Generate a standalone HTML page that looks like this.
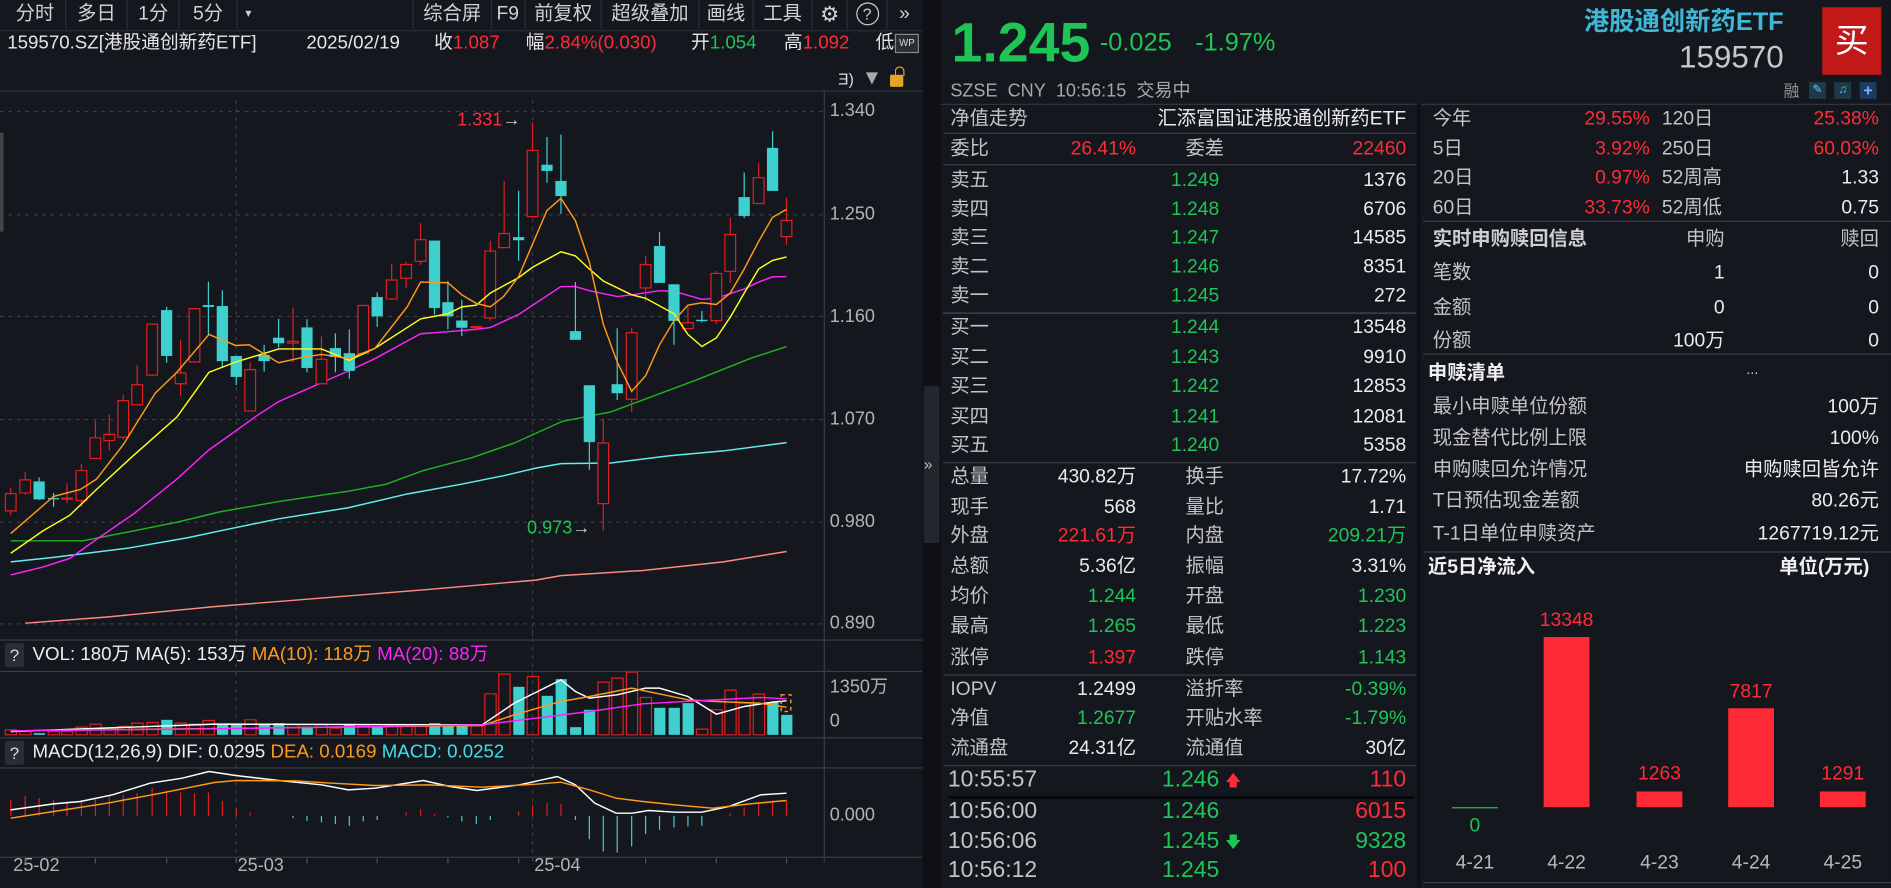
<!DOCTYPE html>
<html><head><meta charset="utf-8">
<style>
html,body{margin:0;padding:0;background:#14171e;overflow:hidden;width:1891px;height:888px}
#w{position:absolute;left:0;top:0;width:1568px;height:736px;transform:scale(1.20599,1.20652);transform-origin:0 0;background:#14171e;font-family:"Liberation Sans","Noto Sans CJK SC",sans-serif;color:#dcdcdc;font-size:16px}
.a{position:absolute;white-space:nowrap;line-height:20px}
.l{color:#c4c4c4}
.v{color:#ececec}
.r{color:#ff2b37}
.g{color:#1fc457}
.hl{position:absolute;height:1px;background:#3a3d44}
.vl{position:absolute;width:1px;background:#2c2f36}
svg{position:absolute;overflow:visible}
.tb{position:absolute;top:0;height:24px;line-height:24px;color:#d2d2d2;font-size:16px;text-align:center}
</style></head><body><div id="w">

<div style="position:absolute;left:0;top:0;width:765px;height:25px;border-bottom:1px solid #2c2f36"></div>
<div class="tb" style="left:4px;width:50px;border-right:1px solid #2c2f36">分时</div>
<div class="tb" style="left:55px;width:50px;border-right:1px solid #2c2f36">多日</div>
<div class="tb" style="left:106px;width:42px;border-right:1px solid #2c2f36">1分</div>
<div class="tb" style="left:149px;width:47px;border-right:1px solid #2c2f36">5分</div>
<div class="tb" style="left:197px;width:18px;font-size:10px">▾</div>
<div class="tb" style="left:342px;width:64px;border-left:1px solid #2c2f36;border-right:1px solid #2c2f36">综合屏</div>
<div class="tb" style="left:407px;width:28px;border-right:1px solid #2c2f36">F9</div>
<div class="tb" style="left:436px;width:62px;border-right:1px solid #2c2f36">前复权</div>
<div class="tb" style="left:499px;width:80px;border-right:1px solid #2c2f36">超级叠加</div>
<div class="tb" style="left:580px;width:44px;border-right:1px solid #2c2f36">画线</div>
<div class="tb" style="left:625px;width:48px;border-right:1px solid #2c2f36">工具</div>
<div class="tb" style="left:674px;width:28px;border-right:1px solid #2c2f36;font-size:18px">⚙</div>
<div class="tb" style="left:703px;width:32px;border-right:1px solid #2c2f36"><span style="display:inline-block;width:17px;height:17px;border:1.5px solid #ccc;border-radius:50%;line-height:17px;font-size:13px;vertical-align:middle">?</span></div>
<div class="tb" style="left:736px;width:28px">»</div>

<div class="a" style="left:6px;top:26px;font-size:15.5px;color:#e6e6e6">159570.SZ[港股通创新药ETF]</div>
<div class="a" style="left:254px;top:26px;font-size:15.5px;color:#e6e6e6">2025/02/19</div>
<div class="a" style="left:360px;top:26px;font-size:15.5px;color:#e6e6e6">收<span class="r">1.087</span></div>
<div class="a" style="left:436px;top:26px;font-size:15.5px;color:#e6e6e6">幅<span class="r">2.84%(0.030)</span></div>
<div class="a" style="left:573px;top:26px;font-size:15.5px;color:#e6e6e6">开<span class="g">1.054</span></div>
<div class="a" style="left:650px;top:26px;font-size:15.5px;color:#e6e6e6">高<span class="r">1.092</span></div>
<div class="a" style="left:726px;top:26px;font-size:15.5px;color:#e6e6e6">低</div>
<div style="position:absolute;left:742px;top:28px;width:18px;height:14px;border:1px solid #888;background:#2a2d33;font-size:8px;line-height:14px;color:#ddd;text-align:center">WP</div>
<div class="a" style="left:695px;top:56px;font-size:13px;color:#ddd">Ǝ)</div>
<div style="position:absolute;left:718px;top:60px;width:0;height:0;border-left:5px solid transparent;border-right:5px solid transparent;border-top:10px solid #aaa"></div>
<div style="position:absolute;left:738px;top:62px;width:11px;height:10px;background:#e0a52a;border-radius:1px"></div>
<div style="position:absolute;left:742px;top:55px;width:6px;height:7px;border:1.5px solid #e0a52a;border-bottom:none;border-radius:4px 4px 0 0"></div>
<div class="hl" style="left:0;top:75px;width:765px;background:#33363d"></div>

<div class="vl" style="left:683px;top:75px;height:640px;background:#3a3d44"></div>
<div class="a" style="left:688px;top:82px;font-size:15px;color:#b4b4b4">1.340</div>
<div class="a" style="left:688px;top:168px;font-size:15px;color:#b4b4b4">1.250</div>
<div class="a" style="left:688px;top:253px;font-size:15px;color:#b4b4b4">1.160</div>
<div class="a" style="left:688px;top:338px;font-size:15px;color:#b4b4b4">1.070</div>
<div class="a" style="left:688px;top:423px;font-size:15px;color:#b4b4b4">0.980</div>
<div class="a" style="left:688px;top:507px;font-size:15px;color:#b4b4b4">0.890</div>
<div class="vl" style="left:0;top:110px;width:3px;height:82px;background:#444"></div>

<svg style="left:0;top:82.9px;width:696.6px;height:447.8px" viewBox="0 0 1568 1568" preserveAspectRatio="none">
<g stroke="#3a3e46" stroke-dasharray="3 4" fill="none">
<line x1="0" y1="33" x2="1540" y2="33" vector-effect="non-scaling-stroke"/>
<line x1="0" y1="333" x2="1540" y2="333" vector-effect="non-scaling-stroke"/>
<line x1="0" y1="628" x2="1540" y2="628" vector-effect="non-scaling-stroke"/>
<line x1="0" y1="927" x2="1540" y2="927" vector-effect="non-scaling-stroke"/>
<line x1="0" y1="1225" x2="1540" y2="1225" vector-effect="non-scaling-stroke"/>
<line x1="0" y1="1520" x2="1540" y2="1520" vector-effect="non-scaling-stroke"/>
<line x1="441" y1="0" x2="441" y2="1568" vector-effect="non-scaling-stroke"/>
<line x1="994" y1="0" x2="994" y2="1568" vector-effect="non-scaling-stroke"/>
</g>
<g fill="none" stroke-width="1.2">
<polyline vector-effect="non-scaling-stroke" stroke="#ff8a80" points="47,1518 200,1500 400,1470 600,1445 800,1420 1000,1393 1047,1380 1200,1365 1350,1340 1468,1310"/>
<polyline vector-effect="non-scaling-stroke" stroke="#5ff0f0" points="20,1340 100,1327 240,1300 350,1270 420,1247 520,1215 650,1183 760,1143 860,1115 940,1090 1000,1068 1047,1055 1140,1053 1250,1032 1350,1018 1468,994"/>
<polyline vector-effect="non-scaling-stroke" stroke="#1fb41f" points="20,1279 155,1279 250,1250 330,1225 410,1195 520,1165 650,1135 720,1115 790,1075 880,1038 960,995 1050,932 1140,905 1200,870 1300,812 1400,750 1468,715"/>
<polyline vector-effect="non-scaling-stroke" stroke="#ff22ff" points="20,1378 80,1355 130,1330 180,1275 250,1200 330,1100 390,1015 440,960 480,915 520,875 600,820 652,785 700,750 785,678 836,672 889,665 915,660 968,622 1047,541 1074,541 1100,553 1152,570 1179,565 1231,553 1258,555 1310,578 1337,575 1389,548 1416,528 1442,513 1468,512"/>
</g>
<g stroke="#e01e1e" fill="#14171e">
<line x1="20" y1="1125" x2="20" y2="1205" vector-effect="non-scaling-stroke"/><rect x="10" y="1142" width="20" height="50" vector-effect="non-scaling-stroke"/>
<line x1="47" y1="1078" x2="47" y2="1145" vector-effect="non-scaling-stroke"/><rect x="37" y="1102" width="20" height="38" vector-effect="non-scaling-stroke"/>
<line x1="125" y1="1112" x2="125" y2="1170" vector-effect="non-scaling-stroke"/><rect x="115" y="1155" width="20" height="3" vector-effect="non-scaling-stroke"/>
<line x1="152" y1="1055" x2="152" y2="1180" vector-effect="non-scaling-stroke"/><rect x="142" y="1075" width="20" height="87" vector-effect="non-scaling-stroke"/>
<line x1="178" y1="930" x2="178" y2="1040" vector-effect="non-scaling-stroke"/><rect x="168" y="980" width="20" height="60" vector-effect="non-scaling-stroke"/>
<line x1="204" y1="912" x2="204" y2="1018" vector-effect="non-scaling-stroke"/><rect x="194" y="970" width="20" height="18" vector-effect="non-scaling-stroke"/>
<line x1="230" y1="855" x2="230" y2="985" vector-effect="non-scaling-stroke"/><rect x="220" y="872" width="20" height="106" vector-effect="non-scaling-stroke"/>
<line x1="256" y1="768" x2="256" y2="884" vector-effect="non-scaling-stroke"/><rect x="246" y="826" width="20" height="58" vector-effect="non-scaling-stroke"/>
<line x1="284" y1="648" x2="284" y2="800" vector-effect="non-scaling-stroke"/><rect x="274" y="650" width="20" height="148" vector-effect="non-scaling-stroke"/>
<line x1="337" y1="695" x2="337" y2="858" vector-effect="non-scaling-stroke"/><rect x="327" y="792" width="20" height="31" vector-effect="non-scaling-stroke"/>
<rect x="353" y="605" width="20" height="155" vector-effect="non-scaling-stroke"/>
<line x1="467" y1="762" x2="467" y2="902" vector-effect="non-scaling-stroke"/><rect x="457" y="782" width="20" height="120" vector-effect="non-scaling-stroke"/>
<line x1="547" y1="602" x2="547" y2="760" vector-effect="non-scaling-stroke"/><rect x="537" y="700" width="20" height="5" vector-effect="non-scaling-stroke"/>
<line x1="600" y1="686" x2="600" y2="823" vector-effect="non-scaling-stroke"/><rect x="590" y="752" width="20" height="71" vector-effect="non-scaling-stroke"/>
<line x1="678" y1="596" x2="678" y2="740" vector-effect="non-scaling-stroke"/><rect x="668" y="596" width="20" height="139" vector-effect="non-scaling-stroke"/>
<line x1="731" y1="475" x2="731" y2="580" vector-effect="non-scaling-stroke"/><rect x="721" y="522" width="20" height="55" vector-effect="non-scaling-stroke"/>
<line x1="758" y1="470" x2="758" y2="545" vector-effect="non-scaling-stroke"/><rect x="748" y="477" width="20" height="40" vector-effect="non-scaling-stroke"/>
<line x1="785" y1="357" x2="785" y2="478" vector-effect="non-scaling-stroke"/><rect x="775" y="405" width="20" height="63" vector-effect="non-scaling-stroke"/>
<line x1="889" y1="655" x2="889" y2="670" vector-effect="non-scaling-stroke"/><rect x="879" y="657" width="20" height="3" vector-effect="non-scaling-stroke"/>
<line x1="915" y1="408" x2="915" y2="640" vector-effect="non-scaling-stroke"/><rect x="905" y="438" width="20" height="194" vector-effect="non-scaling-stroke"/>
<line x1="941" y1="235" x2="941" y2="428" vector-effect="non-scaling-stroke"/><rect x="931" y="387" width="20" height="41" vector-effect="non-scaling-stroke"/>
<line x1="994" y1="65" x2="994" y2="338" vector-effect="non-scaling-stroke"/><rect x="984" y="146" width="20" height="192" vector-effect="non-scaling-stroke"/>
<line x1="1126" y1="925" x2="1126" y2="1250" vector-effect="non-scaling-stroke"/><rect x="1116" y="995" width="20" height="176" vector-effect="non-scaling-stroke"/>
<line x1="1179" y1="660" x2="1179" y2="905" vector-effect="non-scaling-stroke"/><rect x="1169" y="675" width="20" height="193" vector-effect="non-scaling-stroke"/>
<line x1="1205" y1="452" x2="1205" y2="585" vector-effect="non-scaling-stroke"/><rect x="1195" y="477" width="20" height="68" vector-effect="non-scaling-stroke"/>
<line x1="1284" y1="600" x2="1284" y2="663" vector-effect="non-scaling-stroke"/><rect x="1274" y="646" width="20" height="17" vector-effect="non-scaling-stroke"/>
<line x1="1337" y1="496" x2="1337" y2="650" vector-effect="non-scaling-stroke"/><rect x="1327" y="503" width="20" height="137" vector-effect="non-scaling-stroke"/>
<line x1="1363" y1="340" x2="1363" y2="530" vector-effect="non-scaling-stroke"/><rect x="1353" y="390" width="20" height="107" vector-effect="non-scaling-stroke"/>
<line x1="1416" y1="183" x2="1416" y2="300" vector-effect="non-scaling-stroke"/><rect x="1406" y="225" width="20" height="75" vector-effect="non-scaling-stroke"/>
<line x1="1468" y1="283" x2="1468" y2="420" vector-effect="non-scaling-stroke"/><rect x="1458" y="349" width="20" height="47" vector-effect="non-scaling-stroke"/>
</g>
<g stroke="#3ecfcf" fill="#3ecfcf">
<line x1="73" y1="1095" x2="73" y2="1160" vector-effect="non-scaling-stroke"/><rect x="63" y="1107" width="20" height="51"/>
<line x1="100" y1="1140" x2="100" y2="1180" vector-effect="non-scaling-stroke"/><rect x="90" y="1155" width="20" height="3"/>
<line x1="311" y1="600" x2="311" y2="762" vector-effect="non-scaling-stroke"/><rect x="301" y="610" width="20" height="132"/>
<line x1="389" y1="527" x2="389" y2="680" vector-effect="non-scaling-stroke"/><rect x="379" y="595" width="20" height="5"/>
<line x1="415" y1="552" x2="415" y2="775" vector-effect="non-scaling-stroke"/><rect x="405" y="598" width="20" height="159"/>
<line x1="441" y1="743" x2="441" y2="827" vector-effect="non-scaling-stroke"/><rect x="431" y="743" width="20" height="60"/>
<line x1="493" y1="710" x2="493" y2="788" vector-effect="non-scaling-stroke"/><rect x="483" y="740" width="20" height="17"/>
<line x1="520" y1="635" x2="520" y2="718" vector-effect="non-scaling-stroke"/><rect x="510" y="690" width="20" height="15"/>
<line x1="573" y1="636" x2="573" y2="790" vector-effect="non-scaling-stroke"/><rect x="563" y="660" width="20" height="117"/>
<line x1="626" y1="677" x2="626" y2="790" vector-effect="non-scaling-stroke"/><rect x="616" y="720" width="20" height="25"/>
<line x1="652" y1="665" x2="652" y2="808" vector-effect="non-scaling-stroke"/><rect x="642" y="735" width="20" height="50"/>
<line x1="704" y1="558" x2="704" y2="658" vector-effect="non-scaling-stroke"/><rect x="694" y="572" width="20" height="55"/>
<line x1="811" y1="408" x2="811" y2="622" vector-effect="non-scaling-stroke"/><rect x="801" y="408" width="20" height="195"/>
<line x1="836" y1="525" x2="836" y2="665" vector-effect="non-scaling-stroke"/><rect x="826" y="587" width="20" height="40"/>
<line x1="862" y1="580" x2="862" y2="685" vector-effect="non-scaling-stroke"/><rect x="852" y="640" width="20" height="20"/>
<line x1="968" y1="263" x2="968" y2="466" vector-effect="non-scaling-stroke"/><rect x="958" y="398" width="20" height="8"/>
<line x1="1021" y1="107" x2="1021" y2="240" vector-effect="non-scaling-stroke"/><rect x="1011" y="188" width="20" height="17"/>
<line x1="1047" y1="100" x2="1047" y2="330" vector-effect="non-scaling-stroke"/><rect x="1037" y="235" width="20" height="43"/>
<line x1="1074" y1="528" x2="1074" y2="695" vector-effect="non-scaling-stroke"/><rect x="1064" y="671" width="20" height="24"/>
<line x1="1100" y1="828" x2="1100" y2="1073" vector-effect="non-scaling-stroke"/><rect x="1090" y="828" width="20" height="164"/>
<line x1="1152" y1="662" x2="1152" y2="870" vector-effect="non-scaling-stroke"/><rect x="1142" y="825" width="20" height="25"/>
<line x1="1231" y1="383" x2="1231" y2="530" vector-effect="non-scaling-stroke"/><rect x="1221" y="424" width="20" height="106"/>
<line x1="1258" y1="535" x2="1258" y2="710" vector-effect="non-scaling-stroke"/><rect x="1248" y="535" width="20" height="105"/>
<line x1="1310" y1="612" x2="1310" y2="645" vector-effect="non-scaling-stroke"/><rect x="1300" y="638" width="20" height="3"/>
<line x1="1389" y1="210" x2="1389" y2="342" vector-effect="non-scaling-stroke"/><rect x="1379" y="282" width="20" height="54"/>
<line x1="1442" y1="90" x2="1442" y2="263" vector-effect="non-scaling-stroke"/><rect x="1432" y="139" width="20" height="124"/>
</g>
<g fill="none" stroke-width="1.2">
<polyline vector-effect="non-scaling-stroke" stroke="#ffff20" points="20,1315 80,1250 130,1205 180,1130 250,1030 330,920 390,790 440,760 493,735 520,722 600,722 652,755 700,720 760,660 785,635 836,620 862,600 889,595 915,560 968,515 994,485 1047,440 1074,452 1100,490 1126,525 1179,565 1205,575 1258,620 1284,680 1310,715 1337,690 1363,630 1389,560 1416,490 1442,465 1468,455"/>
<polyline vector-effect="non-scaling-stroke" stroke="#ff9a1a" points="20,1258 100,1150 150,1130 180,1100 230,1000 290,850 330,790 390,680 440,712 465,710 520,762 570,745 600,738 652,750 700,720 760,600 785,528 836,530 862,565 889,590 915,600 940,570 968,512 1021,320 1047,285 1074,350 1100,470 1126,650 1152,760 1179,845 1205,800 1231,710 1258,640 1284,595 1310,588 1337,593 1363,560 1389,490 1416,410 1442,340 1468,317"/>
</g>
</svg>
<div class="a r" style="left:379px;top:90px;font-size:15px">1.331<span style="color:#ccc">→</span></div>
<div class="a g" style="left:437px;top:428px;font-size:15px">0.973<span style="color:#ccc">→</span></div>

<div class="hl" style="left:0;top:530px;width:765px;background:#3a3d44"></div>
<div style="position:absolute;left:4px;top:533px;width:16px;height:20px;background:#2a2d33;border-radius:2px;color:#ddd;font-size:14px;text-align:center;line-height:20px">?</div>
<div class="a" style="left:27px;top:533px;font-size:15.5px;color:#eee">VOL: 180万 MA(5): 153万 <span style="color:#ff9a1a">MA(10): 118万</span> <span style="color:#ff22ff">MA(20): 88万</span></div>
<div class="hl" style="left:0;top:556px;width:765px;background:#3a3d44"></div>
<div class="a" style="left:688px;top:560px;font-size:15px;color:#b4b4b4">1350万</div>
<div class="a" style="left:688px;top:588px;font-size:15px;color:#b4b4b4">0</div>
<div class="hl" style="left:0;top:611px;width:765px;background:#3a3d44"></div>
<div style="position:absolute;left:4px;top:614px;width:16px;height:20px;background:#2a2d33;border-radius:2px;color:#ddd;font-size:14px;text-align:center;line-height:20px">?</div>
<div class="a" style="left:27px;top:614px;font-size:15.5px;color:#eee">MACD(12,26,9) DIF: 0.0295 <span style="color:#ff9a1a">DEA: 0.0169</span> <span style="color:#40e0e8">MACD: 0.0252</span></div>
<div class="hl" style="left:0;top:636px;width:765px;background:#3a3d44"></div>
<div class="a" style="left:688px;top:666px;font-size:15px;color:#b4b4b4">0.000</div>
<div class="hl" style="left:0;top:710px;width:765px;background:#3a3d44"></div>
<div class="a" style="left:11px;top:708px;font-size:15px;color:#b4b4b4">25-02</div>
<div class="a" style="left:197px;top:708px;font-size:15px;color:#b4b4b4">25-03</div>
<div class="a" style="left:443px;top:708px;font-size:15px;color:#b4b4b4">25-04</div>

<svg style="left:0;top:522.4px;width:696.6px;height:213.9px" viewBox="0 0 1568 774" preserveAspectRatio="none">
<g stroke="#3a3e46" stroke-dasharray="3 4" fill="none">
<line x1="441" y1="0" x2="441" y2="700" vector-effect="non-scaling-stroke"/>
<line x1="994" y1="0" x2="994" y2="700" vector-effect="non-scaling-stroke"/>
</g>
<g stroke="#555" fill="none">
<path vector-effect="non-scaling-stroke" d="M47 685V700M178 685V700M311 685V700M441 685V700M573 685V700M704 685V700M836 685V700M968 685V700M1074 685V700M1205 685V700M1337 685V700M1468 685V700"/>
</g>
<g stroke="#e01e1e" fill="none">
<rect x="10" y="300" width="21" height="15" vector-effect="non-scaling-stroke"/><rect x="37" y="305" width="21" height="10" vector-effect="non-scaling-stroke"/><rect x="90" y="305" width="21" height="10" vector-effect="non-scaling-stroke"/><rect x="115" y="305" width="21" height="10" vector-effect="non-scaling-stroke"/><rect x="142" y="292" width="21" height="23" vector-effect="non-scaling-stroke"/><rect x="168" y="283" width="21" height="32" vector-effect="non-scaling-stroke"/><rect x="194" y="295" width="21" height="20" vector-effect="non-scaling-stroke"/><rect x="220" y="290" width="21" height="25" vector-effect="non-scaling-stroke"/><rect x="246" y="280" width="21" height="35" vector-effect="non-scaling-stroke"/><rect x="274" y="278" width="21" height="37" vector-effect="non-scaling-stroke"/><rect x="327" y="280" width="21" height="35" vector-effect="non-scaling-stroke"/><rect x="353" y="283" width="21" height="32" vector-effect="non-scaling-stroke"/><rect x="379" y="272" width="21" height="43" vector-effect="non-scaling-stroke"/><rect x="457" y="270" width="21" height="45" vector-effect="non-scaling-stroke"/><rect x="537" y="285" width="21" height="30" vector-effect="non-scaling-stroke"/><rect x="590" y="285" width="21" height="30" vector-effect="non-scaling-stroke"/><rect x="616" y="295" width="21" height="20" vector-effect="non-scaling-stroke"/><rect x="668" y="288" width="21" height="27" vector-effect="non-scaling-stroke"/><rect x="721" y="288" width="21" height="27" vector-effect="non-scaling-stroke"/><rect x="748" y="288" width="21" height="27" vector-effect="non-scaling-stroke"/><rect x="775" y="285" width="21" height="30" vector-effect="non-scaling-stroke"/><rect x="879" y="288" width="21" height="27" vector-effect="non-scaling-stroke"/><rect x="905" y="192" width="21" height="123" vector-effect="non-scaling-stroke"/><rect x="931" y="133" width="21" height="182" vector-effect="non-scaling-stroke"/><rect x="984" y="140" width="21" height="175" vector-effect="non-scaling-stroke"/><rect x="1116" y="157" width="21" height="158" vector-effect="non-scaling-stroke"/><rect x="1142" y="145" width="21" height="170" vector-effect="non-scaling-stroke"/><rect x="1169" y="127" width="21" height="188" vector-effect="non-scaling-stroke"/><rect x="1195" y="203" width="21" height="112" vector-effect="non-scaling-stroke"/><rect x="1300" y="298" width="21" height="17" vector-effect="non-scaling-stroke"/><rect x="1327" y="240" width="21" height="75" vector-effect="non-scaling-stroke"/><rect x="1353" y="181" width="21" height="134" vector-effect="non-scaling-stroke"/><rect x="1379" y="220" width="21" height="95" vector-effect="non-scaling-stroke"/><rect x="1406" y="193" width="21" height="122" vector-effect="non-scaling-stroke"/>
</g>
<g fill="#3ecfcf">
<rect x="63" y="310" width="21" height="5"/><rect x="301" y="270" width="21" height="45"/><rect x="405" y="283" width="21" height="32"/><rect x="431" y="285" width="21" height="30"/><rect x="483" y="285" width="21" height="30"/><rect x="510" y="280" width="21" height="35"/><rect x="563" y="290" width="21" height="25"/><rect x="642" y="285" width="21" height="30"/><rect x="694" y="293" width="21" height="22"/><rect x="801" y="280" width="21" height="35"/><rect x="826" y="285" width="21" height="30"/><rect x="852" y="288" width="21" height="27"/><rect x="958" y="171" width="21" height="144"/><rect x="1011" y="198" width="21" height="117"/><rect x="1037" y="148" width="21" height="167"/><rect x="1064" y="292" width="21" height="23"/><rect x="1090" y="240" width="21" height="75"/><rect x="1221" y="234" width="21" height="81"/><rect x="1248" y="234" width="21" height="81"/><rect x="1274" y="220" width="21" height="95"/><rect x="1432" y="218" width="21" height="97"/><rect x="1458" y="255" width="21" height="60"/>
</g>
<g fill="none" stroke-width="1.2">
<polyline vector-effect="non-scaling-stroke" stroke="#ffffff" points="20,305 400,283 900,285 960,220 1047,150 1074,185 1100,205 1152,195 1205,175 1231,175 1284,200 1337,253 1389,230 1442,217 1468,213"/>
<polyline vector-effect="non-scaling-stroke" stroke="#ff9a1a" points="20,303 900,287 960,255 1047,215 1100,200 1179,175 1284,210 1337,215 1416,220 1468,232"/>
<polyline vector-effect="non-scaling-stroke" stroke="#ff22ff" points="20,303 400,297 900,285 1000,265 1100,245 1200,222 1300,213 1420,203 1468,207"/>
<rect x="1458" y="195" width="18" height="50" stroke="#e0a52a" stroke-dasharray="3 3" vector-effect="non-scaling-stroke"/>
</g>
<g stroke="#e01e1e" fill="none">
<path vector-effect="non-scaling-stroke" d="M20 558V510M47 558V498M73 558V505M100 558V510M125 558V515M152 558V510M178 558V505M204 558V500M230 558V495M256 558V490M284 558V475M311 558V483M337 558V488M363 558V490M389 558V488M415 558V513M441 558V535M467 558V548M758 558V548M785 558V538M811 558V553M968 558V545M994 558V525M1021 558V520M1047 558V523M1363 558V550M1389 558V533M1416 558V520M1442 558V512M1468 558V515"/>
</g>
<g stroke="#3ecfcf" fill="none">
<path vector-effect="non-scaling-stroke" d="M547 558V565M573 558V573M600 558V578M626 558V582M652 558V588M678 558V575M704 558V570M836 558V563M862 558V575M889 558V582M915 558V570M1074 558V570M1100 558V628M1126 558V665M1152 558V668M1179 558V650M1205 558V612M1231 558V600M1258 558V593M1284 558V590M1310 558V588"/>
</g>
<g fill="none" stroke-width="1.2">
<polyline vector-effect="non-scaling-stroke" stroke="#ffffff" points="20,540 100,522 150,515 210,495 280,460 340,445 390,425 440,437 520,452 600,465 650,480 700,475 790,452 840,470 890,482 970,465 1040,440 1074,465 1110,520 1150,550 1180,550 1210,542 1260,547 1310,547 1360,530 1420,495 1468,490"/>
<polyline vector-effect="non-scaling-stroke" stroke="#ff9a1a" points="20,565 100,545 200,520 300,490 400,458 440,452 550,453 620,460 700,467 800,465 900,472 1000,463 1047,457 1100,480 1150,505 1200,515 1260,525 1330,535 1400,522 1468,512"/>
</g>
</svg>

<div style="position:absolute;left:765px;top:0;width:15px;height:736px;background:#0e1015"></div>
<div style="position:absolute;left:766px;top:320px;width:13px;height:130px;background:#23262d"></div>
<div class="a" style="left:766px;top:375px;font-size:13px;color:#bbb">»</div>

<div class="a g" style="left:789px;top:8px;font-size:46px;line-height:54px;font-weight:bold">1.245</div>
<div class="a g" style="left:912px;top:24px;font-size:21px;line-height:24px">-0.025</div>
<div class="a g" style="left:991px;top:24px;font-size:21px;line-height:24px">-1.97%</div>
<div class="a" style="left:788px;top:66px;font-size:15px;color:#a8a8a8">SZSE&nbsp;&nbsp;CNY&nbsp;&nbsp;10:56:15&nbsp;&nbsp;交易中</div>
<div class="hl" style="left:780px;top:86px;width:788px;background:#33363d"></div>

<div class="vl" style="left:1175px;top:86px;height:650px;width:3px;background:#0e1015"></div>

<div class="a l" style="left:788px;top:89px">净值走势</div>
<div class="a v" style="right:402px;top:89px">汇添富国证港股通创新药ETF</div>
<div class="hl" style="left:782px;top:110px;width:392px"></div>
<div class="a l" style="left:788px;top:114px">委比</div><div class="a r" style="right:626px;top:114px">26.41%</div>
<div class="a l" style="left:983px;top:114px">委差</div><div class="a r" style="right:402px;top:114px">22460</div>
<div class="hl" style="left:782px;top:136px;width:392px"></div>

<div class="a l" style="left:788px;top:140px">卖五</div><div class="a g" style="right:557px;top:140px">1.249</div><div class="a v" style="right:402px;top:140px">1376</div>
<div class="a l" style="left:788px;top:164px">卖四</div><div class="a g" style="right:557px;top:164px">1.248</div><div class="a v" style="right:402px;top:164px">6706</div>
<div class="a l" style="left:788px;top:188px">卖三</div><div class="a g" style="right:557px;top:188px">1.247</div><div class="a v" style="right:402px;top:188px">14585</div>
<div class="a l" style="left:788px;top:212px">卖二</div><div class="a g" style="right:557px;top:212px">1.246</div><div class="a v" style="right:402px;top:212px">8351</div>
<div class="a l" style="left:788px;top:236px">卖一</div><div class="a g" style="right:557px;top:236px">1.245</div><div class="a v" style="right:402px;top:236px">272</div>
<div class="hl" style="left:782px;top:259px;width:392px;background:#4a4d54"></div>
<div class="a l" style="left:788px;top:262px">买一</div><div class="a g" style="right:557px;top:262px">1.244</div><div class="a v" style="right:402px;top:262px">13548</div>
<div class="a l" style="left:788px;top:287px">买二</div><div class="a g" style="right:557px;top:287px">1.243</div><div class="a v" style="right:402px;top:287px">9910</div>
<div class="a l" style="left:788px;top:311px">买三</div><div class="a g" style="right:557px;top:311px">1.242</div><div class="a v" style="right:402px;top:311px">12853</div>
<div class="a l" style="left:788px;top:336px">买四</div><div class="a g" style="right:557px;top:336px">1.241</div><div class="a v" style="right:402px;top:336px">12081</div>
<div class="a l" style="left:788px;top:360px">买五</div><div class="a g" style="right:557px;top:360px">1.240</div><div class="a v" style="right:402px;top:360px">5358</div>
<div class="hl" style="left:782px;top:383px;width:392px"></div>

<div class="a l" style="left:788px;top:386px">总量</div><div class="a v" style="right:626px;top:386px">430.82万</div><div class="a l" style="left:983px;top:386px">换手</div><div class="a v" style="right:402px;top:386px">17.72%</div>
<div class="a l" style="left:788px;top:411px">现手</div><div class="a v" style="right:626px;top:411px">568</div><div class="a l" style="left:983px;top:411px">量比</div><div class="a v" style="right:402px;top:411px">1.71</div>
<div class="a l" style="left:788px;top:435px">外盘</div><div class="a r" style="right:626px;top:435px">221.61万</div><div class="a l" style="left:983px;top:435px">内盘</div><div class="a g" style="right:402px;top:435px">209.21万</div>
<div class="a l" style="left:788px;top:460px">总额</div><div class="a v" style="right:626px;top:460px">5.36亿</div><div class="a l" style="left:983px;top:460px">振幅</div><div class="a v" style="right:402px;top:460px">3.31%</div>
<div class="a l" style="left:788px;top:485px">均价</div><div class="a g" style="right:626px;top:485px">1.244</div><div class="a l" style="left:983px;top:485px">开盘</div><div class="a g" style="right:402px;top:485px">1.230</div>
<div class="a l" style="left:788px;top:510px">最高</div><div class="a g" style="right:626px;top:510px">1.265</div><div class="a l" style="left:983px;top:510px">最低</div><div class="a g" style="right:402px;top:510px">1.223</div>
<div class="a l" style="left:788px;top:536px">涨停</div><div class="a r" style="right:626px;top:536px">1.397</div><div class="a l" style="left:983px;top:536px">跌停</div><div class="a g" style="right:402px;top:536px">1.143</div>
<div class="hl" style="left:782px;top:559px;width:392px"></div>
<div class="a l" style="left:788px;top:562px">IOPV</div><div class="a v" style="right:626px;top:562px">1.2499</div><div class="a l" style="left:983px;top:562px">溢折率</div><div class="a g" style="right:402px;top:562px">-0.39%</div>
<div class="a l" style="left:788px;top:586px">净值</div><div class="a g" style="right:626px;top:586px">1.2677</div><div class="a l" style="left:983px;top:586px">开贴水率</div><div class="a g" style="right:402px;top:586px">-1.79%</div>
<div class="a l" style="left:788px;top:611px">流通盘</div><div class="a v" style="right:626px;top:611px">24.31亿</div><div class="a l" style="left:983px;top:611px">流通值</div><div class="a v" style="right:402px;top:611px">30亿</div>
<div class="hl" style="left:782px;top:634px;width:392px"></div>

<div class="a l" style="left:786px;top:636px;font-size:19px;line-height:22px">10:55:57</div><div class="a g" style="right:557px;top:636px;font-size:19px;line-height:22px">1.246</div><div class="a r" style="left:1016px;top:637px;font-size:13px">🡅</div><div class="a r" style="right:402px;top:636px;font-size:19px;line-height:22px">110</div>
<div class="hl" style="left:786px;top:660px;width:386px;background:#050608;height:2px"></div>
<div class="a l" style="left:786px;top:662px;font-size:19px;line-height:22px">10:56:00</div><div class="a g" style="right:557px;top:662px;font-size:19px;line-height:22px">1.246</div><div class="a r" style="right:402px;top:662px;font-size:19px;line-height:22px">6015</div>
<div class="a l" style="left:786px;top:687px;font-size:19px;line-height:22px">10:56:06</div><div class="a g" style="right:557px;top:687px;font-size:19px;line-height:22px">1.245</div><div class="a g" style="left:1016px;top:688px;font-size:13px">🡇</div><div class="a g" style="right:402px;top:687px;font-size:19px;line-height:22px">9328</div>
<div class="a l" style="left:786px;top:711px;font-size:19px;line-height:22px">10:56:12</div><div class="a g" style="right:557px;top:711px;font-size:19px;line-height:22px">1.245</div><div class="a r" style="right:402px;top:711px;font-size:19px;line-height:22px">100</div>

<div class="a" style="right:89px;top:6px;font-size:21px;line-height:26px;color:#3fb7d6;font-weight:bold">港股通创新药ETF</div>
<div class="a" style="right:89px;top:32px;font-size:26px;line-height:30px;color:#c8c8c8">159570</div>
<div style="position:absolute;left:1511px;top:6px;width:49px;height:56px;background:#c21818;color:#fff;font-size:28px;line-height:56px;text-align:center">买</div>
<div class="a" style="left:1479px;top:66px;font-size:13px;color:#999">融</div>
<div style="position:absolute;left:1500px;top:68px;width:14px;height:14px;background:#1d3a48;color:#5fd0f0;font-size:10px;line-height:14px;text-align:center">✎</div>
<div style="position:absolute;left:1521px;top:68px;width:14px;height:14px;background:#1d3a48;color:#5fa8f0;font-size:10px;line-height:14px;text-align:center">♫</div>
<div style="position:absolute;left:1542px;top:68px;width:14px;height:14px;background:#1d3a60;color:#7fb8ff;font-size:13px;line-height:14px;text-align:center;font-weight:bold">+</div>

<div class="a l" style="left:1188px;top:89px">今年</div><div class="a r" style="right:200px;top:89px">29.55%</div><div class="a l" style="left:1378px;top:89px">120日</div><div class="a r" style="right:10px;top:89px">25.38%</div>
<div class="a l" style="left:1188px;top:114px">5日</div><div class="a r" style="right:200px;top:114px">3.92%</div><div class="a l" style="left:1378px;top:114px">250日</div><div class="a r" style="right:10px;top:114px">60.03%</div>
<div class="a l" style="left:1188px;top:138px">20日</div><div class="a r" style="right:200px;top:138px">0.97%</div><div class="a l" style="left:1378px;top:138px">52周高</div><div class="a v" style="right:10px;top:138px">1.33</div>
<div class="a l" style="left:1188px;top:163px">60日</div><div class="a r" style="right:200px;top:163px">33.73%</div><div class="a l" style="left:1378px;top:163px">52周低</div><div class="a v" style="right:10px;top:163px">0.75</div>
<div class="hl" style="left:1180px;top:183px;width:388px"></div>
<div class="a" style="left:1188px;top:189px;font-weight:bold;color:#cfcfcf">实时申购赎回信息</div><div class="a l" style="right:138px;top:189px">申购</div><div class="a l" style="right:10px;top:189px">赎回</div>
<div class="a l" style="left:1188px;top:217px">笔数</div><div class="a v" style="right:138px;top:217px">1</div><div class="a v" style="right:10px;top:217px">0</div>
<div class="a l" style="left:1188px;top:246px">金额</div><div class="a v" style="right:138px;top:246px">0</div><div class="a v" style="right:10px;top:246px">0</div>
<div class="a l" style="left:1188px;top:273px">份额</div><div class="a v" style="right:138px;top:273px">100万</div><div class="a v" style="right:10px;top:273px">0</div>
<div class="hl" style="left:1180px;top:293px;width:388px"></div>
<div class="a" style="left:1184px;top:300px;font-weight:bold;color:#f0f0f0">申赎清单</div><div class="a" style="left:1448px;top:296px;color:#ccc;font-size:12px">...</div>
<div class="a l" style="left:1188px;top:328px">最小申赎单位份额</div><div class="a v" style="right:10px;top:328px">100万</div>
<div class="a l" style="left:1188px;top:354px">现金替代比例上限</div><div class="a v" style="right:10px;top:354px">100%</div>
<div class="a l" style="left:1188px;top:380px">申购赎回允许情况</div><div class="a v" style="right:10px;top:380px">申购赎回皆允许</div>
<div class="a l" style="left:1188px;top:406px">T日预估现金差额</div><div class="a v" style="right:10px;top:406px">80.26元</div>
<div class="a l" style="left:1188px;top:433px">T-1日单位申赎资产</div><div class="a v" style="right:10px;top:433px">1267719.12元</div>
<div class="hl" style="left:1180px;top:457px;width:388px"></div>
<div class="a" style="left:1184px;top:461px;font-weight:bold;color:#f0f0f0">近5日净流入</div>
<div class="a" style="right:18px;top:461px;font-weight:bold;color:#f0f0f0">单位(万元)</div>

<div style="position:absolute;left:1204px;top:669px;width:38px;height:1px;background:#1fc457"></div>
<div class="a g" style="left:1204px;width:38px;text-align:center;top:675px">0</div>
<div style="position:absolute;left:1280px;top:528px;width:38px;height:141px;background:#fe2b37"></div>
<div class="a r" style="left:1269px;width:60px;text-align:center;top:505px">13348</div>
<div style="position:absolute;left:1357px;top:656px;width:38px;height:13px;background:#fe2b37"></div>
<div class="a r" style="left:1346px;width:60px;text-align:center;top:632px">1263</div>
<div style="position:absolute;left:1433px;top:587px;width:38px;height:82px;background:#fe2b37"></div>
<div class="a r" style="left:1422px;width:60px;text-align:center;top:564px">7817</div>
<div style="position:absolute;left:1509px;top:656px;width:38px;height:13px;background:#fe2b37"></div>
<div class="a r" style="left:1498px;width:60px;text-align:center;top:632px">1291</div>
<div class="a" style="left:1193px;width:60px;text-align:center;top:706px;color:#b8b8b8">4-21</div>
<div class="a" style="left:1269px;width:60px;text-align:center;top:706px;color:#b8b8b8">4-22</div>
<div class="a" style="left:1346px;width:60px;text-align:center;top:706px;color:#b8b8b8">4-23</div>
<div class="a" style="left:1422px;width:60px;text-align:center;top:706px;color:#b8b8b8">4-24</div>
<div class="a" style="left:1498px;width:60px;text-align:center;top:706px;color:#b8b8b8">4-25</div>
<div class="hl" style="left:1180px;top:731px;width:388px"></div>

</div></body></html>
